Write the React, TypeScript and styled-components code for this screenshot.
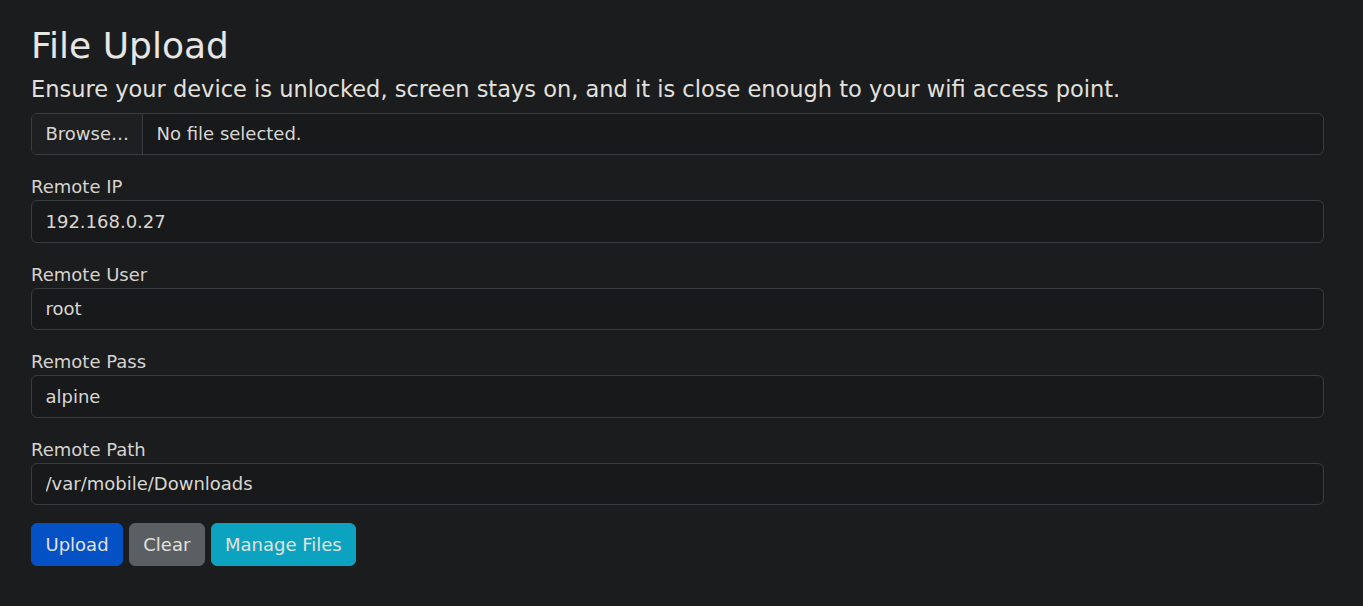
import React from 'react';
import styled, { createGlobalStyle } from 'styled-components';

const GlobalStyle = createGlobalStyle`
  html {
    font-size: 18px;
  }
  body {
    margin: 0;
    background: #1b1c1e;
    color: #e2e0dc;
    font-family: "DejaVu Sans", "Noto Sans", sans-serif;
    line-height: 1.5;
  }
  *, *::before, *::after {
    box-sizing: border-box;
  }
`;

const Page = styled.main`
  padding: 24px 39px 24px 31px;
`;

const Title = styled.h2`
  margin: 0 0 9px;
  font-size: 2rem;
  font-weight: 400;
  line-height: 1.2;
  color: #e8e6e3;
`;

const Lead = styled.h5`
  margin: 0 0 9.5px;
  font-size: 1.25rem;
  font-weight: 400;
  line-height: 1.2;
  color: #e2e0dc;
`;

const Group = styled.div`
  margin-bottom: 1rem;
`;

const Label = styled.label`
  display: block;
  margin: 0;
  font-size: 1rem;
  line-height: 27px;
  color: #d6d3ce;
`;

const Field = styled.input`
  display: block;
  width: 100%;
  padding: 6.75px 13.5px;
  font: inherit;
  font-size: 1rem;
  line-height: 27px;
  color: #d9d6d1;
  background: #18191b;
  border: 1px solid #3a3c3f;
  border-radius: 6px;
  outline: none;
`;

const FilePicker = styled.label`
  display: flex;
  width: 100%;
  background: #18191b;
  border: 1px solid #3a3c3f;
  border-radius: 6px;
  overflow: hidden;
  font-size: 1rem;
  line-height: 27px;
  color: #d9d6d1;
  cursor: pointer;

  input {
    display: none;
  }
`;

const BrowsePart = styled.span`
  padding: 6.75px 13px 6.75px 13.5px;
  background: #1d1f21;
  border-right: 1px solid #3a3c3f;
`;

const FileName = styled.span`
  padding: 6.75px 13.5px;
`;

const Actions = styled.div`
  display: flex;
  gap: 5.7px;
`;

const Button = styled.button<{ $bg: string }>`
  padding: 6.75px 13.5px;
  font: inherit;
  font-size: 1rem;
  line-height: 27px;
  color: #e3e1dd;
  background: ${(p) => p.$bg};
  border: 1px solid ${(p) => p.$bg};
  border-radius: 6px;
  cursor: pointer;
`;

const fields = [
  { id: 'ip', label: 'Remote IP', value: '192.168.0.27' },
  { id: 'user', label: 'Remote User', value: 'root' },
  { id: 'pass', label: 'Remote Pass', value: 'alpine' },
  { id: 'path', label: 'Remote Path', value: '/var/mobile/Downloads' },
];

export default function App() {
  return (
    <>
      <GlobalStyle />
      <Page>
        <Title>File Upload</Title>
        <Lead>Ensure your device is unlocked, screen stays on, and it is close enough to your wifi access point.</Lead>
        <Group>
          <FilePicker>
            <input type="file" />
            <BrowsePart>Browse…</BrowsePart>
            <FileName>No file selected.</FileName>
          </FilePicker>
        </Group>
        {fields.map((f) => (
          <Group key={f.id}>
            <Label htmlFor={f.id}>{f.label}</Label>
            <Field id={f.id} defaultValue={f.value} />
          </Group>
        ))}
        <Actions>
          <Button $bg="#0451c6">Upload</Button>
          <Button $bg="#5a5f63">Clear</Button>
          <Button $bg="#0ba3bf">Manage Files</Button>
        </Actions>
      </Page>
    </>
  );
}
